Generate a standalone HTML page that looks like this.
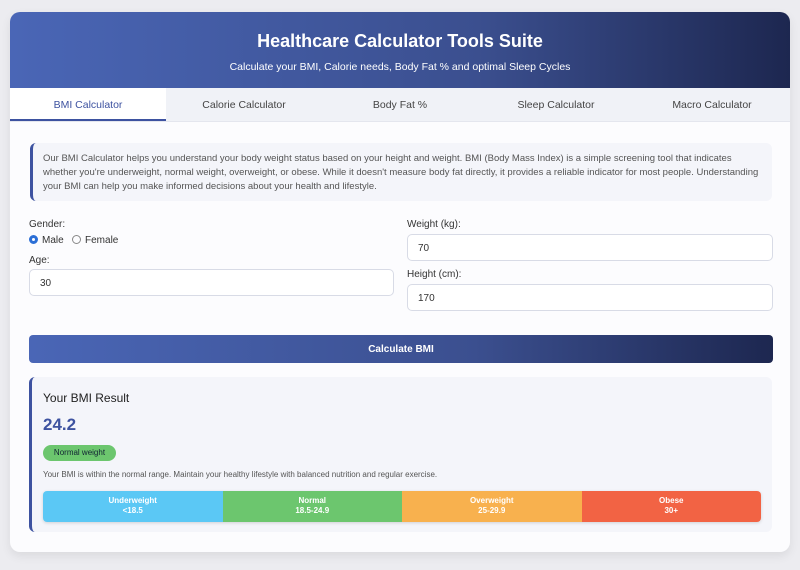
<!DOCTYPE html>
<html><head><style>
*{box-sizing:border-box;margin:0;padding:0}
body{width:800px;height:570px;background:#ececf0;font-family:"Liberation Sans",sans-serif;color:#333;overflow:hidden;position:relative}
.c{position:absolute;left:10px;top:12px;width:780px;height:540px;background:#fcfcfe;border-radius:10px;overflow:hidden;box-shadow:0 4px 10px rgba(0,0,0,.08)}
.h{height:76px;background:linear-gradient(90deg,#4a66b6,#3b4f8f 60%,#1d2750);color:#fff;text-align:center}
.h h1{font-size:18px;font-weight:bold;padding-top:19px}
.h p{font-size:10.5px;margin-top:9px}
.tabs{display:flex;height:34px;background:#f0f2f7;border-bottom:1px solid #e4e6ee}
.tabs div{flex:1;text-align:center;font-size:10.5px;line-height:34px;color:#444}
.tabs .a{background:#fff;color:#3d52a0;border-bottom:2px solid #3d52a0}
.info{position:absolute;left:20px;top:131px;width:742px;height:58px;background:#f4f5fa;border-left:3px solid #3d52a0;border-radius:6px;padding:9px 10px;font-size:9.5px;line-height:14px;color:#555}
.lbl{position:absolute;font-size:10px;color:#333}
.in{position:absolute;height:27px;border:1px solid #d8dbe6;border-radius:5px;background:#fff;font-size:10px;padding:0 10px;line-height:28px}
.btn{position:absolute;left:19px;top:323px;width:744px;height:28px;border-radius:4px;background:linear-gradient(90deg,#4a66b6,#3b4f8f 60%,#1d2750);color:#fff;font-size:10px;font-weight:bold;text-align:center;line-height:30px}
.res{position:absolute;left:19px;top:365px;width:743px;height:155px;background:#f4f5fa;border-left:3px solid #3d52a0;border-radius:6px}
.bar{position:absolute;left:11px;top:114px;width:718px;height:31px;display:flex;border-radius:4px;overflow:hidden;box-shadow:0 1px 3px rgba(0,0,0,.15)}
.bar div{flex:1;color:#fff;font-size:8px;font-weight:bold;text-align:center;padding-top:5px;line-height:10px}
.rad{display:inline-block;width:9px;height:9px;border-radius:50%;border:1px solid #888;vertical-align:-1px;margin-right:4px}
</style></head><body>
<div class="c">
<div class="h"><h1>Healthcare Calculator Tools Suite</h1><p>Calculate your BMI, Calorie needs, Body Fat % and optimal Sleep Cycles</p></div>
<div class="tabs"><div class="a">BMI Calculator</div><div>Calorie Calculator</div><div>Body Fat %</div><div>Sleep Calculator</div><div>Macro Calculator</div></div>
<div class="info">Our BMI Calculator helps you understand your body weight status based on your height and weight. BMI (Body Mass Index) is a simple screening tool that indicates whether you're underweight, normal weight, overweight, or obese. While it doesn't measure body fat directly, it provides a reliable indicator for most people. Understanding your BMI can help you make informed decisions about your health and lifestyle.</div>
<div class="lbl" style="left:19px;top:207px">Gender:</div>
<div class="lbl" style="left:19px;top:223px"><span class="rad" style="border:3px solid #2c6fd6"></span>Male &nbsp; <span class="rad"></span>Female</div>
<div class="lbl" style="left:19px;top:243px">Age:</div>
<div class="in" style="left:19px;top:257px;width:365px">30</div>
<div class="lbl" style="left:397px;top:207px">Weight (kg):</div>
<div class="in" style="left:397px;top:222px;width:366px">70</div>
<div class="lbl" style="left:397px;top:257px">Height (cm):</div>
<div class="in" style="left:397px;top:272px;width:366px">170</div>
<div class="btn">Calculate BMI</div>
<div class="res">
<div style="position:absolute;left:11px;top:14px;font-size:12px;color:#222">Your BMI Result</div>
<div style="position:absolute;left:11px;top:38px;font-size:17px;font-weight:bold;color:#3d52a0">24.2</div>
<div style="position:absolute;left:11px;top:68px;width:73px;height:16px;border-radius:8px;background:#6cc66e;font-size:8px;line-height:16px;text-align:center;color:#123">Normal weight</div>
<div style="position:absolute;left:11px;top:93px;font-size:8px;color:#555">Your BMI is within the normal range. Maintain your healthy lifestyle with balanced nutrition and regular exercise.</div>
<div class="bar"><div style="background:#5bc8f5">Underweight<br>&lt;18.5</div><div style="background:#6cc66e">Normal<br>18.5-24.9</div><div style="background:#f8b14e">Overweight<br>25-29.9</div><div style="background:#f26344">Obese<br>30+</div></div>
</div>
</div>
</body></html>
